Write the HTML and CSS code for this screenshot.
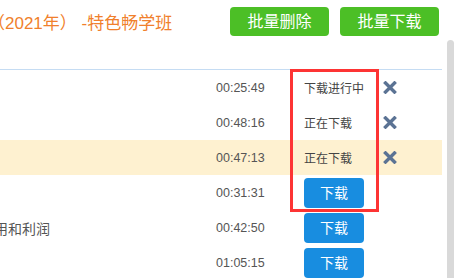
FILE: index.html
```html
<!DOCTYPE html>
<html lang="zh">
<head>
<meta charset="utf-8">
<link rel="stylesheet" href="styles.css">
</head>
<body>
<div class="page">
  <div class="main">
    <div class="header">
      <div class="title">（2021年） -特色畅学班</div>
      <div class="actions">
        <button class="btn btn-green">批量删除</button>
        <button class="btn btn-green">批量下载</button>
      </div>
    </div>
    <div class="table">
      <div class="row">
        <div class="name"></div>
        <div class="time">00:25:49</div>
        <div class="status">下载进行中</div>
        <div class="op"><svg class="x" viewBox="0 0 14 13" width="14" height="13"><path d="M2.5 2 L11.5 11 M11.5 2 L2.5 11"/></svg></div>
      </div>
      <div class="row">
        <div class="name"></div>
        <div class="time">00:48:16</div>
        <div class="status">正在下载</div>
        <div class="op"><svg class="x" viewBox="0 0 14 13" width="14" height="13"><path d="M2.5 2 L11.5 11 M11.5 2 L2.5 11"/></svg></div>
      </div>
      <div class="row row-active">
        <div class="name"></div>
        <div class="time">00:47:13</div>
        <div class="status">正在下载</div>
        <div class="op"><svg class="x" viewBox="0 0 14 13" width="14" height="13"><path d="M2.5 2 L11.5 11 M11.5 2 L2.5 11"/></svg></div>
      </div>
      <div class="row">
        <div class="name"></div>
        <div class="time">00:31:31</div>
        <div class="status"><button class="btn btn-blue">下载</button></div>
        <div class="op"></div>
      </div>
      <div class="row">
        <div class="name"><span class="cut">用和利润</span></div>
        <div class="time">00:42:50</div>
        <div class="status"><button class="btn btn-blue">下载</button></div>
        <div class="op"></div>
      </div>
      <div class="row">
        <div class="name"></div>
        <div class="time">01:05:15</div>
        <div class="status"><button class="btn btn-blue">下载</button></div>
        <div class="op"></div>
      </div>
      <div class="mark"></div>
    </div>
  </div>
  <div class="scroll">
    <div class="thumb"></div>
  </div>
</div>
</body>
</html>
```

FILE: styles.css
```css
html, body {
  margin: 0;
  padding: 0;
  background: #fff;
}
body {
  width: 463px;
  height: 278px;
  overflow: hidden;
  font-family: "Liberation Sans", "Noto Sans CJK SC", sans-serif;
}
.page {
  display: flex;
  height: 278px;
}
.main {
  width: 442px;
  flex: none;
}
.header {
  height: 69px;
  display: flex;
  justify-content: space-between;
  align-items: flex-start;
  padding: 7px 3px 0 0;
  box-sizing: border-box;
}
.title {
  margin: 5px 0 0 -12px;
  font-size: 17px;
  line-height: 24px;
  color: #f07f2c;
  white-space: nowrap;
}
.actions {
  display: flex;
  gap: 11px;
}
.btn {
  border: 0;
  padding: 0;
  margin: 0;
  color: #fff;
  font-family: "Liberation Sans", "Noto Sans CJK SC", sans-serif;
  border-radius: 4px;
  cursor: pointer;
}
.btn-green {
  width: 99px;
  height: 29px;
  font-size: 16px;
  line-height: 29px;
  background: #4cbf26;
}
.btn-blue {
  width: 60px;
  height: 30px;
  font-size: 14px;
  line-height: 30px;
  background: #188de0;
}
.table {
  position: relative;
  border-top: 1px solid #c5dcf3;
}
.row {
  display: grid;
  grid-template-columns: 216px 74px 89px 1fr;
  height: 35px;
  align-items: center;
}
.row-active {
  background: #fef1d0;
}
.name {
  font-size: 14px;
  color: #555;
  white-space: nowrap;
  overflow: hidden;
}
.cut {
  display: inline-block;
  margin-left: -6px;
}
.time {
  font-size: 12.5px;
  color: #555;
}
.status {
  padding-left: 14px;
  font-size: 12px;
  color: #444;
  display: flex;
  align-items: center;
}
.op {
  padding-left: 4px;
  display: flex;
  align-items: center;
}
.x {
  display: block;
}
.x path {
  stroke: #5b7394;
  stroke-width: 3.4;
  stroke-linecap: square;
  fill: none;
}
.mark {
  position: absolute;
  left: 290px;
  top: -1px;
  width: 89px;
  height: 143px;
  border: 3px solid #fd3434;
  box-sizing: border-box;
}
.scroll {
  width: 7px;
  margin-left: 5px;
  padding-top: 40px;
  box-sizing: border-box;
}
.thumb {
  height: 238px;
  background: #d9d9d9;
  border-radius: 4px 4px 0 0;
}
```
